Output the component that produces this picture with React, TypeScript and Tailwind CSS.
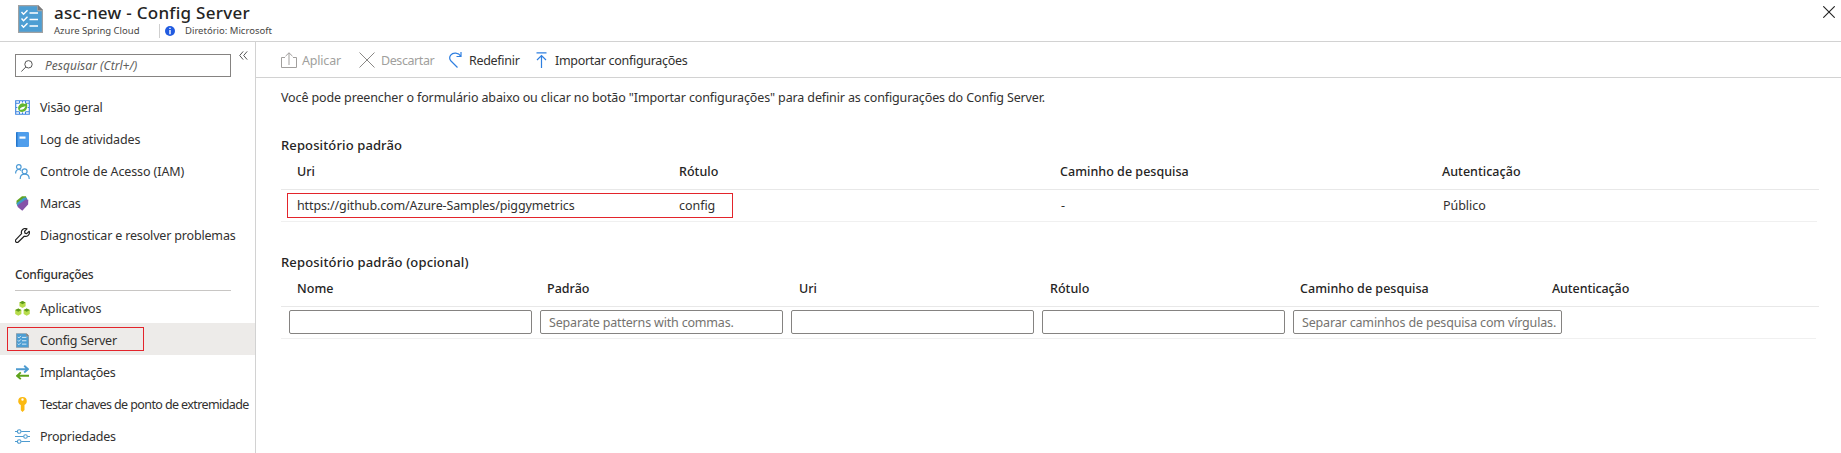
import type { ReactNode } from "react";

function ChecklistIcon({ className }: { className: string }) {
  return (
    <svg className={className} viewBox="0 0 25 28" fill="none">
      <path d="M0 0h20l5 5v23H0z" fill="#a0a1a2" />
      <path d="M1.2 1.2h18v5h4.6v20.600H1.200z" fill="#4d9ed3" />
      <path d="M20 0l5 5h-5z" fill="#7a7b7c" />
      <path d="M3.500 7l2 2.200 4-4M3.500 13.500l2 2.200 4-4M3.500 20l2 2.200 4-4" stroke="#fff" strokeWidth="1.400" />
      <path d="M11.500 8H20M11.500 14.500H20M11.500 21H20" stroke="#fff" strokeWidth="1.500" />
    </svg>
  );
}

const icons: Record<string, ReactNode> = {
  overview: (
    <svg className="size-[15px]" viewBox="0 0 15 15" fill="none">
      <path d="M.7.700h13.600v13.600H.7zM7.500.700v3M7.500 11.300v3M.7 7.500h2M12.300 7.500h2M4.500.700v2.500H.7M10.500.700v2.500h3.800M4.500 14.300v-2.500H.7M10.500 14.300v-2.500h3.800" stroke="#3b83e0" strokeWidth="1.100" />
      <circle cx="7.500" cy="7.500" r="5" fill="#fff" />
      <path d="M11.600 2.800c.8 1.800 1 4-.1 6.400a4.600 4.600 0 01-7.600 1.200A4.500 4.500 0 019.800 4c.8-.2 1.300-.6 1.800-1.200z" fill="#62b62f" />
      <path d="M4.800 9.700c2.400.4 4.800-.5 5.700-3.700-1.200 1-2.400.8-3.600 1.200-1.300.4-2.100 1.300-2.100 2.500z" fill="#fff" />
    </svg>
  ),
  log: (
    <svg className="ml-px h-[15px] w-[13px]" viewBox="0 0 13 15">
      <rect width="13" height="15" rx="1.200" fill="#4f9eec" />
      <path d="M0 1.200A1.200 1.200 0 011.200 0H1.500v15h-.3A1.200 1.200 0 010 13.800z" fill="#2476cc" />
      <rect x="3.500" y="4.500" width="6" height="2.200" fill="#fff" />
    </svg>
  ),
  people: (
    <svg className="size-[15px]" viewBox="0 0 15 15" fill="none" stroke="#4d9bd6" strokeWidth="1.200">
      <circle cx="3.800" cy="2.900" r="2.300" />
      <path d="M.6 9.500c0-2.500 1.200-4 3.200-4 1 0 1.800.3 2.400 1" />
      <circle cx="9.600" cy="7.300" r="2.500" />
      <path d="M5.200 15c0-3 1.700-4.800 4.400-4.800s4.600 1.800 4.600 4.800" />
    </svg>
  ),
  tag: (
    <svg className="size-[15px]" viewBox="0 0 15 15">
      <path d="M1.500 4.800L7 .3 11 .2l.6 3.500L4 10.500 1.500 8z" fill="#62a420" />
      <path d="M1.800 7L9 1.500l3 .2.300 3.500L5 12 2 9.500z" fill="#3f9bc8" />
      <path d="M2.500 9.300L11 3.200l2.300.5-.2 4.800L7.300 14.800 2.700 11z" fill="#8552a8" />
    </svg>
  ),
  wrench: (
    <svg className="size-[15px]" viewBox="0 0 15 15" fill="none" stroke="#222" strokeWidth="1.200">
      <path d="M12 .9A3.900 3.900 0 006.600 5.700L.9 11.700a1.550 1.550 0 002.400 2.300l5.900-5.800A3.900 3.900 0 0014.200 3.300L11.700 5.600 9.900 5.200 9.600 3.200z" strokeLinejoin="round" />
    </svg>
  ),
  apps: (
    <svg className="size-[15px]" viewBox="0 0 15 15">
      <path d="M7.500 0l3.100 1.500v3.700l-3.100 1.700-3.100-1.700V1.500zM3.300 7.500l3.100 1.600v3.800L3.300 14.700.2 12.900V9.100zM11.700 7.500l3.100 1.600v3.800l-3.100 1.800-3.100-1.800V9.100z" fill="#b7dc4c" />
      <path d="M7.500 0l3.100 1.500-3.100 1.700-3.100-1.700zM3.300 7.500l3.100 1.600-3.100 1.700L.2 9.100zM11.700 7.500l3.100 1.600-3.100 1.700-3.100-1.700z" fill="#5e9a1c" />
    </svg>
  ),
  config: <ChecklistIcon className="ml-px h-[15px] w-[13px]" />,
  deploy: (
    <svg className="ml-px h-[15px] w-[13px]" viewBox="0 0 13 15" fill="none" strokeWidth="1.900">
      <path d="M0 4.200h11.500M8.200.8L12 4.200 8.200 7.500" stroke="#4d9bd0" />
      <path d="M13 10.800H1.500M4.800 7.400L1 10.800l3.800 3.300" stroke="#5ea31c" />
    </svg>
  ),
  key: (
    <svg className="size-[15px]" viewBox="0 0 15 15">
      <path fillRule="evenodd" d="M7.500 0a4.300 4.300 0 014.300 4.200c0 1.700-.9 3-2.300 3.800v5L7.500 15 5.800 13.200V8C4.300 7.300 3.200 6 3.200 4.200A4.300 4.300 0 017.500 0zm0 1.300a1.200 1.200 0 100 2.400 1.200 1.200 0 000-2.400z" fill="#fbb911" />
    </svg>
  ),
  sliders: (
    <svg className="size-[15px]" viewBox="0 0 15 15" fill="none" stroke="#4d9bd0" strokeWidth="1.100">
      <path d="M0 2.500h2.200M6.200 2.500H15M0 7.500h8.500M12.500 7.500H15M0 12.500h2.200M6.200 12.500H15" />
      <circle cx="4.200" cy="2.500" r="1.800" />
      <circle cx="10.500" cy="7.500" r="1.800" />
      <circle cx="4.200" cy="12.500" r="1.800" />
    </svg>
  ),
};

function NavItem({ icon, label, active }: { icon: string; label: ReactNode; active?: boolean }) {
  return (
    <li className={active ? "relative flex h-8 items-center bg-[#edebe9] pl-[15px]" : "flex h-8 items-center pl-[15px]"}>
      <span className="flex w-[25px] shrink-0 items-center">{icons[icon]}</span>
      <span className="pt-[2px]">{label}</span>
      {active && <span className="absolute top-[4px] left-[7px] h-[24px] w-[137px] border border-[#e3242b]" />}
    </li>
  );
}

function Field({ className, placeholder }: { className: string; placeholder?: string }) {
  return (
    <input
      placeholder={placeholder}
      className={`h-6 shrink-0 rounded-[2px] border border-[#858381] pt-px pr-0 pl-2 placeholder:text-[#75736f] ${className}`}
    />
  );
}

export default function App() {
  return (
    <div className="flex h-[453px] w-[1841px] flex-col overflow-hidden bg-white font-['Noto_Sans',sans-serif] text-[12.5px] leading-4 whitespace-nowrap text-[#323130]">
      <header className="flex h-[42px] shrink-0 border-b border-[#d2d2d2]">
        <ChecklistIcon className="mt-[5px] ml-[18px] h-[28px] w-[25px]" />
        <div className="ml-[11px] flex flex-col">
          <h1 className="mt-[3px] h-5 text-[17px] leading-5 font-medium tracking-[0.28px] text-[#252423]">asc-new - Config Server</h1>
          <div className="flex h-4 items-center text-[9.5px] text-[#484644]">
            <span className="w-[105px]">Azure Spring Cloud</span>
            <span className="h-[14px] w-px bg-[#cfcfcf]" />
            <svg className="ml-[5px] size-[10px]" viewBox="0 0 10 10">
              <circle cx="5" cy="5" r="5" fill="#215be0" />
              <path d="M4.300 1.800h1.400v1.300H4.300zM4.300 4h1.400v4.200H4.300z" fill="#fff" />
            </svg>
            <span className="ml-[10px]">Diretório: Microsoft</span>
          </div>
        </div>
        <svg className="mt-[6px] mr-[6px] ml-auto size-3" viewBox="0 0 12 12" stroke="#222" strokeWidth="1.100">
          <path d="M.3.300l11.400 11.400M11.700.3L.3 11.700" />
        </svg>
      </header>

      <div className="flex min-h-0 flex-1">
        <aside className="w-[256px] shrink-0 border-r border-[#d2d2d2]">
          <div className="flex pt-[12px] pl-[15px]">
            <label className="flex h-[23px] w-[216px] items-center border border-[#858381]">
              <svg className="ml-[5px] size-3" viewBox="0 0 12 12" fill="none" stroke="#555" strokeWidth="1">
                <circle cx="7.500" cy="4.300" r="3.700" />
                <path d="M4.800 7L.3 11.600" />
              </svg>
              <span className="ml-[12px] text-[12px] tracking-[0.02px] text-[#605e5c] italic">Pesquisar (Ctrl+/)</span>
            </label>
            <svg className="-mt-[3px] ml-[8px] h-[9px] w-[9px]" viewBox="0 0 9 9" fill="none" stroke="#555" strokeWidth="1">
              <path d="M4.200.4L.7 4.500l3.500 4.100M8.200.4L4.700 4.500l3.500 4.100" />
            </svg>
          </div>
          <ul className="mt-[14px]">
            <NavItem icon="overview" label={<span className="tracking-[-0.17px]">Visão geral</span>} />
            <NavItem icon="log" label={<span className="tracking-[-0.15px]">Log de atividades</span>} />
            <NavItem icon="people" label={<span className="tracking-[-0.1px]">Controle de Acesso (IAM)</span>} />
            <NavItem icon="tag" label={<span className="tracking-[-0.3px]">Marcas</span>} />
            <NavItem icon="wrench" label={<span className="tracking-[-0.17px]">Diagnosticar e resolver problemas</span>} />
          </ul>
          <h2 className="mr-6 ml-[15px] h-[40px] border-b border-[#c8c6c4] pt-[16px] text-[12px] font-medium tracking-[-0.33px]">Configurações</h2>
          <ul className="[&>li]:pt-[2px]">
            <NavItem icon="apps" label={<span className="tracking-[-0.13px]">Aplicativos</span>} />
            <NavItem icon="config" active label={<span className="tracking-[-0.18px]">Config Server</span>} />
            <NavItem icon="deploy" label={<span className="tracking-[-0.36px]">Implantações</span>} />
            <NavItem icon="key" label={<span className="tracking-[-0.6px]">Testar chaves de ponto de extremidade</span>} />
            <NavItem icon="sliders" label={<span className="tracking-[-0.23px]">Propriedades</span>} />
          </ul>
        </aside>

        <main className="min-w-0 flex-1">
          <div className="flex h-[36px] items-center border-b border-[#d2d2d2] pl-[25px]">
            <div className="flex w-[78px] items-center gap-[5px] text-[#a19f9d]">
              <svg className="size-4" viewBox="0 0 16 16" fill="none" stroke="#a19f9d" strokeWidth="1">
                <path d="M4 5.500H.5v10h15v-10H12M8 13V.8M4.500 4.200L8 .8l3.500 3.400" />
              </svg>
              <span className="pt-[2px] tracking-[-0.19px]">Aplicar</span>
            </div>
            <div className="flex w-[90px] items-center gap-[6px] text-[#a19f9d]">
              <svg className="size-4" viewBox="0 0 16 16" stroke="#8a8886" strokeWidth="1">
                <path d="M.5.500l15 15M15.500.500l-15 15" />
              </svg>
              <span className="pt-[2px] tracking-[-0.42px]">Descartar</span>
            </div>
            <div className="flex w-[87px] items-center gap-[7px]">
              <svg className="h-4 w-[13px]" viewBox="0 0 13 16" fill="none" stroke="#2f7fe0" strokeWidth="1.200">
                <path d="M12 0v4.500H7.500M11.800 4.300C9.500.5 4 .2 1.700 3.200c-1.500 2-1.300 4 .3 5.800L8.500 15.500" />
              </svg>
              <span className="pt-[2px] tracking-[-0.3px]">Redefinir</span>
            </div>
            <div className="flex items-center gap-[8px]">
              <svg className="h-4 w-[11px]" viewBox="0 0 11 16" fill="none" stroke="#2f7fe0" strokeWidth="1.200">
                <path d="M.5.800h10M5.500 16V4M1 8l4.500-4.400L10 8" />
              </svg>
              <span className="pt-[2px] tracking-[-0.3px]">Importar configurações</span>
            </div>
          </div>

          <div className="pl-[25px]">
            <p className="mt-[12px] tracking-[-0.127px]">
              Você pode preencher o formulário abaixo ou clicar no botão "Importar configurações" para definir as configurações do Config Server.
            </p>

            <h2 className="mt-[31px] text-[13px] font-medium tracking-[0.12px] text-[#252423]">Repositório padrão</h2>
            <div className="grid h-[37px] w-[1538px] grid-cols-[382px_381px_382px_1fr] items-start border-b border-[#e8e8e8] pt-[11px] pl-4 font-medium tracking-[0.03px] text-[#252423]">
              <span>Uri</span>
              <span>Rótulo</span>
              <span>Caminho de pesquisa</span>
              <span>Autenticação</span>
            </div>
            <div className="relative grid h-8 w-[1536px] grid-cols-[382px_381px_382px_1fr] items-center border-b border-[#f0f0f0] pl-4">
              <span className="tracking-[-0.12px]">https://github.com/Azure-Samples/piggymetrics</span>
              <span className="tracking-[-0.05px]">config</span>
              <span className="pl-px">-</span>
              <span className="pl-px tracking-[-0.05px]">Público</span>
              <span className="absolute top-[3px] left-[6px] h-[25px] w-[446px] border border-[#e3242b]" />
            </div>

            <h2 className="mt-[32px] text-[13px] font-medium tracking-[0.15px] text-[#252423]">Repositório padrão (opcional)</h2>
            <div className="grid h-[37px] w-[1538px] grid-cols-[250px_252px_251px_250px_252px_1fr] items-start border-b border-[#e8e8e8] pt-[11px] pl-4 font-medium tracking-[0.03px] text-[#252423]">
              <span>Nome</span>
              <span>Padrão</span>
              <span>Uri</span>
              <span>Rótulo</span>
              <span>Caminho de pesquisa</span>
              <span className="tracking-[-0.08px]">Autenticação</span>
            </div>
            <div className="flex h-8 w-[1535px] items-start gap-2 border-b border-[#f0f0f0] pt-[3px] pl-2">
              <Field className="w-[243px]" />
              <Field className="w-[243px] tracking-[-0.18px]" placeholder="Separate patterns with commas." />
              <Field className="w-[243px]" />
              <Field className="w-[243px]" />
              <Field className="w-[269px] tracking-[-0.16px]" placeholder="Separar caminhos de pesquisa com vírgulas." />
            </div>
          </div>
        </main>
      </div>
    </div>
  );
}
